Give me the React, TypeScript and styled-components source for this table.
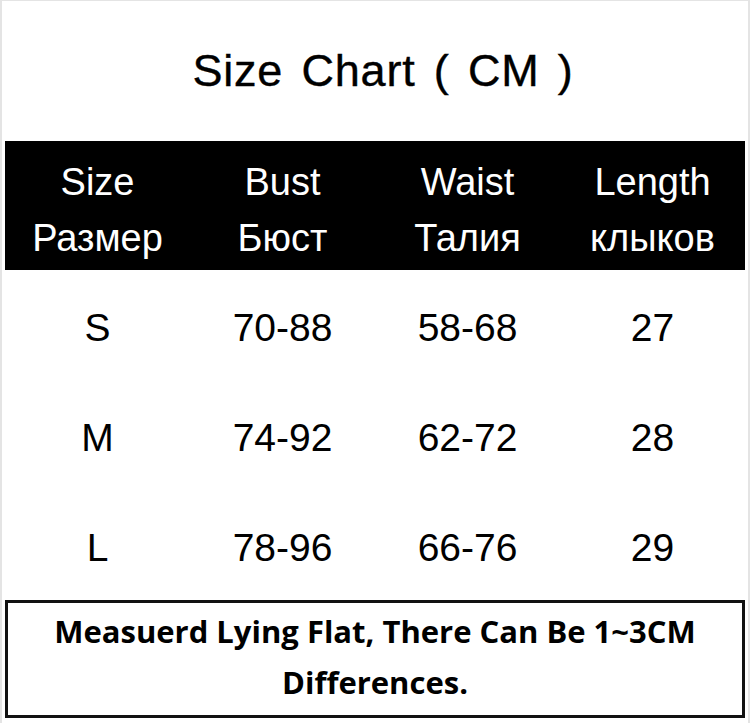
import styled, { createGlobalStyle } from "styled-components";

const Global = createGlobalStyle`
  html, body {
    margin: 0;
    padding: 0;
    background: #ffffff;
  }
`;

const Page = styled.div`
  width: 750px;
  height: 723px;
  box-sizing: border-box;
  padding: 0 3px 5px 3px;
  display: flex;
  flex-direction: column;
  font-family: "Liberation Sans", Arial, sans-serif;
  color: #000;
  border-left: 2px solid #e4e4e4;
  border-right: 2px solid #e4e4e4;
  border-top: 1px solid #e4e4e4;
`;

const Title = styled.div`
  height: 142px;
  display: flex;
  align-items: center;
  justify-content: center;
  font-size: 45px;
  letter-spacing: 0.8px;
  word-spacing: 5px;
  -webkit-text-stroke: 0.4px #000;
  padding-left: 16px;
  box-sizing: border-box;
`;

const Grid = styled.div<{ $dark?: boolean }>`
  display: grid;
  grid-template-columns: repeat(4, 1fr);
  background: ${(p) => (p.$dark ? "#000" : "transparent")};
  color: ${(p) => (p.$dark ? "#fff" : "#000")};
`;

const HeadCell = styled.div`
  height: 129px;
  display: flex;
  flex-direction: column;
  align-items: center;
  justify-content: center;
  font-size: 38px;
  line-height: 56px;
  padding-top: 8px;
  box-sizing: border-box;
`;

const Cell = styled.div`
  height: 110px;
  display: flex;
  align-items: center;
  justify-content: center;
  font-size: 39px;
  padding-top: 5px;
  box-sizing: border-box;
`;

const Note = styled.div`
  height: 119px;
  box-sizing: border-box;
  border: 3px solid #111;
  display: flex;
  flex-direction: column;
  align-items: center;
  justify-content: center;
  font-family: "Open Sans", "Noto Sans", sans-serif;
  font-weight: 700;
  font-size: 31px;
  line-height: 51px;
  text-align: center;
  padding-bottom: 4px;
`;

const headers = [
  ["Size", "Размер"],
  ["Bust", "Бюст"],
  ["Waist", "Талия"],
  ["Length", "клыков"],
];

const rows = [
  ["S", "70-88", "58-68", "27"],
  ["M", "74-92", "62-72", "28"],
  ["L", "78-96", "66-76", "29"],
];

export default function App() {
  return (
    <>
      <Global />
      <Page>
        <Title>Size Chart ( CM )</Title>
        <Grid $dark>
          {headers.map(([en, ru]) => (
            <HeadCell key={en}>
              <span>{en}</span>
              <span>{ru}</span>
            </HeadCell>
          ))}
        </Grid>
        <Grid>
          {rows.map((r) => r.map((v, i) => <Cell key={r[0] + i}>{v}</Cell>))}
        </Grid>
        <Note>
          <span>Measuerd Lying Flat, There Can Be 1~3CM</span>
          <span>Differences.</span>
        </Note>
      </Page>
    </>
  );
}
